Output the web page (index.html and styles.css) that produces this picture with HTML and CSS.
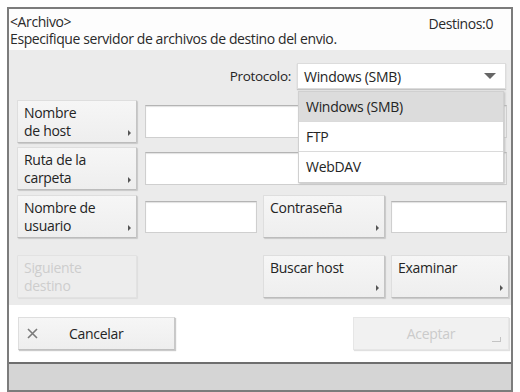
FILE: index.html
```html
<!DOCTYPE html>
<html lang="es">
<head>
<meta charset="utf-8">
<title>Archivo</title>
<link rel="stylesheet" href="styles.css">
</head>
<body>
<div class="screen">
  <header class="header">
    <div class="title">
      <div>&lt;Archivo&gt;</div>
      <div>Especifique servidor de archivos de destino del envio.</div>
    </div>
    <div class="dest">Destinos:0</div>
  </header>

  <main class="main">
    <div class="proto-row">
      <span class="proto-label">Protocolo:</span>
      <div class="select">
        <span>Windows (SMB)</span>
        <span class="select-arrow"></span>
      </div>
    </div>

    <div class="row row-a">
      <button class="btn btn-arrow">Nombre<br>de host</button>
      <div class="input input-wide"></div>
    </div>
    <div class="row row-b">
      <button class="btn btn-arrow">Ruta de la<br>carpeta</button>
      <div class="input input-wide"></div>
    </div>
    <div class="row row-c">
      <button class="btn btn-arrow">Nombre de<br>usuario</button>
      <div class="input"></div>
      <button class="btn btn-arrow">Contraseña</button>
      <div class="input input-end"></div>
    </div>
    <div class="row row-d">
      <button class="btn btn-disabled">Siguiente<br>destino</button>
      <div></div>
      <button class="btn btn-arrow">Buscar host</button>
      <button class="btn btn-arrow">Examinar</button>
    </div>

    <ul class="dropdown">
      <li class="selected">Windows (SMB)</li>
      <li>FTP</li>
      <li>WebDAV</li>
    </ul>
  </main>

  <footer class="footer">
    <button class="fbtn cancel">
      <svg class="x" width="11" height="11" viewBox="0 0 11 11"><path d="M1 1L10 10M10 1L1 10" stroke="#7a7a7a" stroke-width="1.6" fill="none"/></svg>
      <span>Cancelar</span>
    </button>
    <button class="fbtn accept"><span>Aceptar</span><span class="enter"></span></button>
  </footer>
  <div class="status"></div>
</div>
</body>
</html>
```

FILE: styles.css
```css
* { box-sizing: border-box; }

html, body {
  margin: 0;
  padding: 0;
  width: 520px;
  height: 392px;
  overflow: hidden;
  background: #ffffff;
  font-family: "Open Sans", "Noto Sans", sans-serif;
  letter-spacing: -0.3px;
  color: #242424;
}

.screen {
  margin: 7px 0 0 7px;
  width: 506px;
  height: 385px;
  border: 2px solid #7c7c7c;
  display: flex;
  flex-direction: column;
}

/* header */
.header {
  height: 41px;
  flex: none;
  background: #fdfdfd;
  display: flex;
  justify-content: space-between;
  padding: 4px 18px 0 1px;
  font-size: 14px;
  letter-spacing: -0.4px;
  line-height: 17px;
  color: #2a2a2a;
}
.dest { padding-top: 2px; }

/* main gray panel */
.main {
  position: relative;
  height: 255px;
  flex: none;
  background: #ebebeb;
  padding: 13px 3px 0 8px;
}

.proto-row {
  height: 26px;
  display: flex;
  justify-content: flex-end;
  align-items: center;
  font-size: 13.5px;
}
.proto-label { margin-right: 6px; }
.select {
  width: 209px;
  height: 26px;
  margin-right: 2px;
  background: #fff;
  border: 1px solid #dcdcdc;
  box-shadow: 0 1px 1px #c4c4c4;
  display: flex;
  align-items: center;
  justify-content: space-between;
  padding: 0 9px 0 6px;
  font-size: 14px;
  color: #242424;
}
.select-arrow {
  width: 0;
  height: 0;
  border-top: 6px solid #666;
  border-left: 6px solid transparent;
  border-right: 6px solid transparent;
}

.row {
  display: grid;
  grid-template-columns: 120px 114px 122px 118px;
  column-gap: 6px;
  height: 43px;
}
.row-a { margin-top: 11px; }
.row-b { margin-top: 4px; }
.row-c { margin-top: 5px; }
.row-d { margin-top: 17px; }

.btn {
  position: relative;
  margin: 0;
  font-family: inherit;
  letter-spacing: -0.3px;
  font-size: 14px;
  line-height: 18px;
  color: #242424;
  text-align: left;
  padding: 3px 6px 0 6px;
  display: flex;
  align-items: flex-start;
  background: linear-gradient(#f6f6f6, #eeeeee);
  border: 1px solid #dedede;
  border-right-color: #c4c4c4;
  border-bottom-color: #bcbcbc;
  box-shadow: 1px 1px 1px #c8c8c8;
  border-radius: 1px;
}
.btn-arrow::after {
  content: "";
  position: absolute;
  right: 5px;
  bottom: 6px;
  border-left: 3px solid #555;
  border-top: 3px solid transparent;
  border-bottom: 3px solid transparent;
}
.btn-disabled {
  color: #cdcdcd;
  background: #ededed;
  border-color: #e2e2e2;
  box-shadow: 1px 1px 1px #dedede;
}

.input {
  align-self: center;
  height: 33px;
  background: #fff;
  border: 1px solid #cfcfcf;
  border-top-color: #b4b4b4;
  box-shadow: inset 0 1px 1px #e2e2e2;
  margin-left: 2px;
}
.input-wide {
  grid-column: 2 / 5;
  margin-right: 2px;
}
.row-c .input { height: 32px; }
.input-end { margin-left: 0; margin-right: 2px; }

/* dropdown menu over the inputs */
.dropdown {
  position: absolute;
  left: 289px;
  top: 41px;
  width: 206px;
  margin: 0;
  padding: 0;
  list-style: none;
  background: #fff;
  border: 1px solid #d0d0d0;
  box-shadow: 1px 1px 2px #bdbdbd;
  font-size: 14px;
  color: #242424;
}
.dropdown li {
  height: 30px;
  line-height: 29px;
  padding-left: 7px;
  border-bottom: 1px solid #dadada;
}
.dropdown li:last-child { border-bottom: none; }
.dropdown .selected { background: #dcdcdc; }

/* footer */
.footer {
  height: 57px;
  flex: none;
  background: #fff;
  display: flex;
  justify-content: space-between;
  align-items: center;
  padding: 0 2px 0 9px;
}
.fbtn {
  position: relative;
  margin: 0;
  height: 33px;
  font-family: inherit;
  letter-spacing: -0.3px;
  font-size: 14px;
  background: linear-gradient(#f6f6f6, #eeeeee);
  border: 1px solid #dedede;
  border-right-color: #c8c8c8;
  border-bottom-color: #c0c0c0;
  box-shadow: 1px 1px 1px #cacaca;
  color: #242424;
  display: flex;
  align-items: center;
}
.cancel {
  width: 157px;
  padding: 0 0 0 8px;
}
.cancel .x {
  margin-right: 31px;
}
.accept {
  width: 156px;
  justify-content: center;
  color: #cbcbcb;
  background: #f1f1f1;
  border-color: #e6e6e6;
  box-shadow: 1px 1px 1px #e0e0e0;
}
.enter {
  position: absolute;
  right: 7px;
  bottom: 7px;
  width: 9px;
  height: 5px;
  border-right: 1px solid #c4c4c4;
  border-bottom: 1px solid #c4c4c4;
}

/* bottom status bar */
.status {
  flex: 1;
  background: #d5d5d5;
  border-top: 2px solid #6e6e6e;
}
```
